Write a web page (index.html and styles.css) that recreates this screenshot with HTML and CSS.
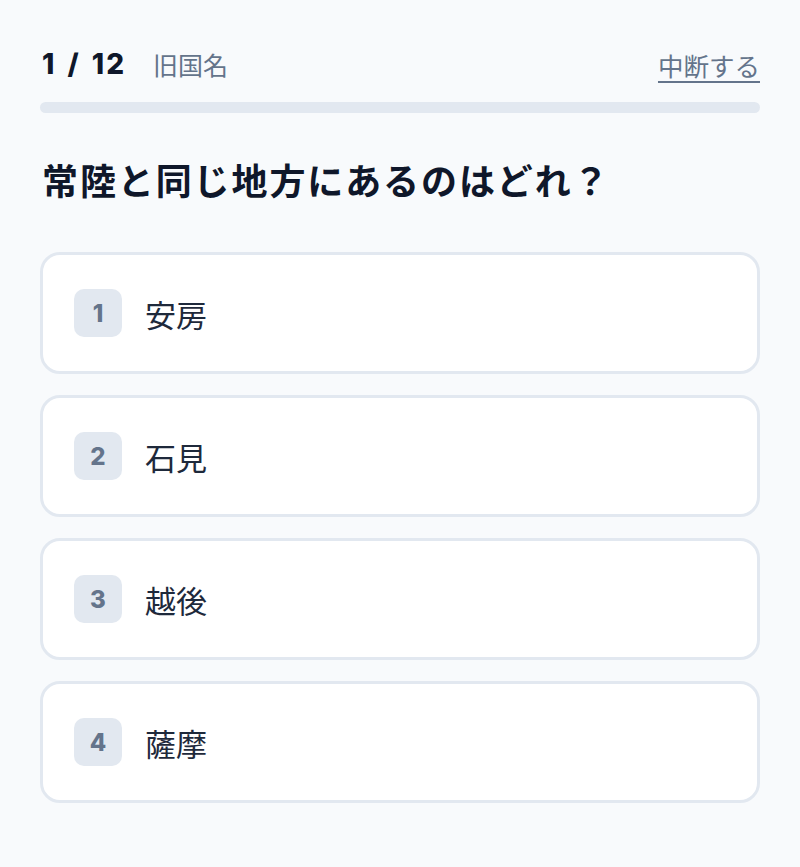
FILE: index.html
```html
<!DOCTYPE html>
<html lang="ja">
<head>
    <meta charset="UTF-8">
    <meta name="viewport" content="width=device-width, initial-scale=1.0">
    <title>旧国名クイズ</title>
    <link rel="stylesheet" href="styles.css">
</head>
<body>
    <div class="container">
        <div class="quiz-header">
            <div class="progress-info">
                <span class="count">1 / 12</span>
                <span class="category">旧国名</span>
            </div>
            <a class="quit-link" href="#">中断する</a>
        </div>
        <div class="progress-bar"><div class="progress-fill"></div></div>

        <h1 class="question">常陸と同じ地方にあるのはどれ？</h1>

        <div class="choices">
            <button class="choice"><span class="choice-num">1</span><span class="choice-text">安房</span></button>
            <button class="choice"><span class="choice-num">2</span><span class="choice-text">石見</span></button>
            <button class="choice"><span class="choice-num">3</span><span class="choice-text">越後</span></button>
            <button class="choice"><span class="choice-num">4</span><span class="choice-text">薩摩</span></button>
        </div>
    </div>
</body>
</html>
```

FILE: styles.css
```css
body {
    margin: 0;
    padding: 0;
    background-color: #f8fafc;
    font-family: Inter, "Noto Sans CJK JP", sans-serif;
    color: #0f172a;
}
.container {
    padding: 46px 40px;
}
.quiz-header {
    display: flex;
    justify-content: space-between;
    align-items: center;
    height: 36px;
}
.progress-info {
    display: flex;
    align-items: center;
    gap: 27px;
}
.count {
    margin-left: 2px;
    font-size: 28px;
    font-weight: 800;
    letter-spacing: 2px;
    word-spacing: 3px;
    color: #0f172a;
}
.category {
    font-size: 25px;
    color: #64748b;
}
.quit-link {
    font-size: 25.5px;
    color: #64748b;
    text-decoration: underline;
    text-decoration-thickness: 2px;
    text-underline-offset: 5px;
}
.progress-bar {
    margin-top: 20px;
    height: 11px;
    border-radius: 6px;
    background-color: #e2e8f0;
    overflow: hidden;
}
.progress-fill {
    width: 0;
    height: 100%;
}
.question {
    margin: 47px 0 47px 2px;
    font-size: 36px;
    font-weight: 700;
    letter-spacing: 1.9px;
    line-height: 45px;
    color: #0f172a;
}
.choices {
    display: flex;
    flex-direction: column;
    gap: 21px;
}
.choice {
    display: flex;
    align-items: center;
    gap: 23px;
    padding: 34px 31px;
    background-color: #ffffff;
    border: 3px solid #e2e8f0;
    border-radius: 20px;
    font-family: inherit;
    text-align: left;
    cursor: pointer;
}
.choice-num {
    display: flex;
    justify-content: center;
    align-items: center;
    width: 48px;
    height: 48px;
    border-radius: 10px;
    background-color: #e2e8f0;
    color: #64748b;
    font-size: 24px;
    font-weight: 800;
}
.choice-text {
    font-size: 31px;
    color: #1e293b;
}
```
